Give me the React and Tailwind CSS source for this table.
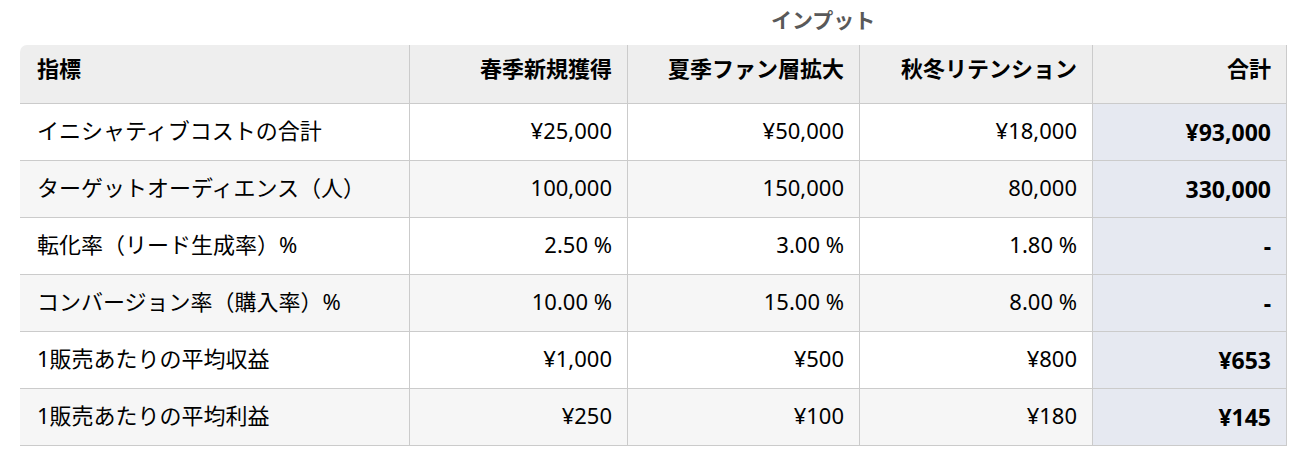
import React from "react";

const rows = [
  { label: "イニシャティブコストの合計", vals: ["¥25,000", "¥50,000", "¥18,000"], total: "¥93,000" },
  { label: "ターゲットオーディエンス（人）", vals: ["100,000", "150,000", "80,000"], total: "330,000" },
  { label: "転化率（リード生成率）%", vals: ["2.50 %", "3.00 %", "1.80 %"], total: "-" },
  { label: "コンバージョン率（購入率）%", vals: ["10.00 %", "15.00 %", "8.00 %"], total: "-" },
  { label: "1販売あたりの平均収益", vals: ["¥1,000", "¥500", "¥800"], total: "¥653" },
  { label: "1販売あたりの平均利益", vals: ["¥250", "¥100", "¥180"], total: "¥145" },
];

const heads = ["春季新規獲得", "夏季ファン層拡大", "秋冬リテンション"];

const App = () => {
  return (
    <div
      className="w-[1306px] h-[471px] bg-white text-black"
      style={{ fontFamily: '"Noto Sans", "Noto Sans CJK JP", sans-serif' }}
    >
      {/* group label */}
      <div className="h-[45px] pl-[771px] pt-[5px] text-[21px] font-bold text-[#595959] leading-[30px]">
        インプット
      </div>

      <div className="ml-[20px] w-[1267px] grid grid-cols-[389px_218px_232px_233px_195px] text-[22px] leading-[30px]">
        {/* header */}
        <div className="h-[59px] bg-[#eeeeee] rounded-tl-[7px] border-b border-[#cbcbcb] px-[17px] pt-[8px] font-bold">
          指標
        </div>
        {heads.map((h) => (
          <div
            key={h}
            className="h-[59px] bg-[#eeeeee] border-b border-l border-[#cbcbcb] px-[15px] pt-[8px] font-bold text-right"
          >
            {h}
          </div>
        ))}
        <div className="h-[59px] bg-[#eeeeee] border-b border-l border-r border-[#cbcbcb] px-[15px] pt-[8px] font-bold text-right">
          合計
        </div>

        {/* body */}
        {rows.map((r, i) => {
          const bg = i % 2 === 1 ? "bg-[#f6f6f6]" : "bg-white";
          return (
            <React.Fragment key={r.label}>
              <div className={`h-[57px] ${bg} border-b border-[#cbcbcb] px-[17px] pt-[11px]`}>
                {r.label}
              </div>
              {r.vals.map((v, j) => (
                <div
                  key={j}
                  className={`h-[57px] ${bg} border-b border-l border-[#cbcbcb] px-[15px] pt-[11px] text-right`}
                >
                  {v}
                </div>
              ))}
              <div className="h-[57px] bg-[#e6e9f1] border-b border-l border-r border-[#cbcbcb] px-[15px] pt-[13px] text-right text-[23px] font-bold">
                {r.total}
              </div>
            </React.Fragment>
          );
        })}
      </div>
    </div>
  );
};

export default App;
